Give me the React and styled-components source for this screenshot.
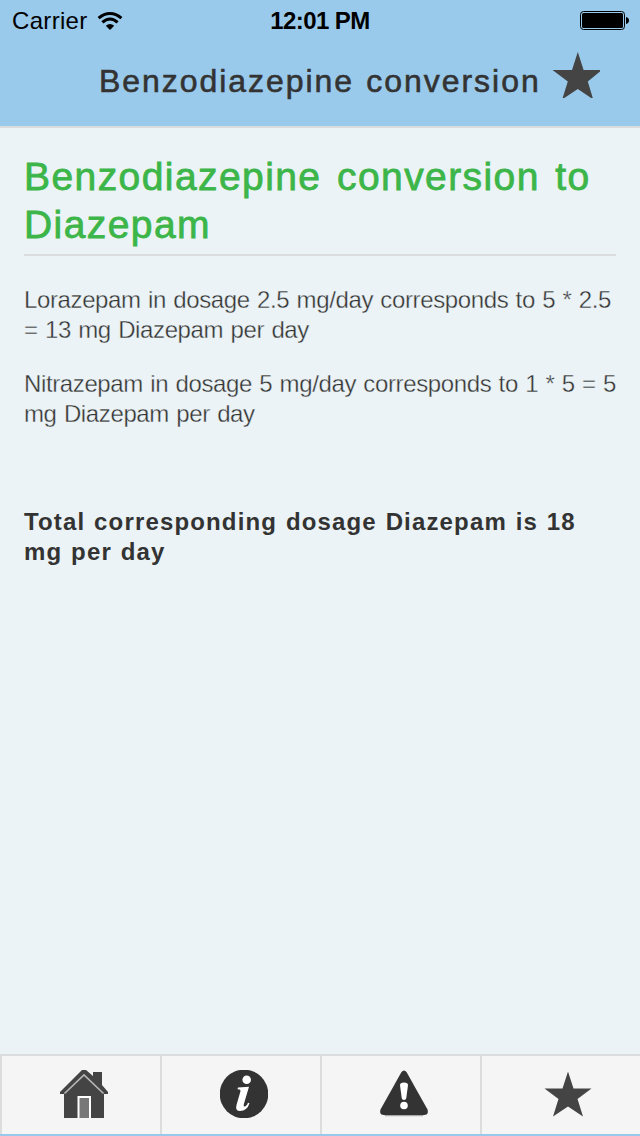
import React from "react";
import styled, { createGlobalStyle } from "styled-components";

const Global = createGlobalStyle`
  * { box-sizing: border-box; }
  body { margin: 0; background: #9acaeb; }
`;

const Screen = styled.div`
  width: 640px;
  height: 1136px;
  display: flex;
  flex-direction: column;
  background: #ebf3f6;
  color: #333;
  font-family: "Liberation Sans", Arial, sans-serif;
  border-bottom: 2px solid #9acaeb;
  overflow: hidden;
`;

const TopArea = styled.header`
  height: 128px;
  flex: none;
  background: #9acaeb;
  border-bottom: 2px solid #dbdcdd;
`;

const StatusBar = styled.div`
  display: grid;
  grid-template-columns: 1fr auto 1fr;
  align-items: center;
  height: 40px;
  padding: 0 11px 0 12px;
  color: #000;
  font-size: 24px;
`;

const Network = styled.div`
  display: flex;
  align-items: center;
  gap: 9px;
  letter-spacing: 0.32px;
  line-height: 28px;
  padding-top: 1px;
`;

const Clock = styled.div`
  font-weight: 700;
  letter-spacing: -0.6px;
  line-height: 28px;
  padding: 2px 1px 0 0;
`;

const Battery = styled.div`
  display: flex;
  justify-content: flex-end;
`;

const TitleBar = styled.div`
  display: flex;
  align-items: flex-start;
  padding: 12px 40px 0 99px;
`;

const Title = styled.h1`
  flex: 1;
  width: 0;
  margin: 10px 0 0;
  font-size: 32px;
  line-height: 38px;
  font-weight: 400;
  letter-spacing: 1.95px;
  word-spacing: 1.5px;
  white-space: nowrap;
  -webkit-text-stroke: 0.6px #333;
`;

const Content = styled.main`
  flex: 1;
  padding: 25px 24px 0;
`;

const Heading = styled.h2`
  margin: 0 0 29px;
  height: 103px;
  border-bottom: 2px solid #dbdcdd;
  color: #3cb549;
  font-size: 39px;
  line-height: 48px;
  font-weight: 400;
  letter-spacing: 1.42px;
  word-spacing: 3.3px;
  -webkit-text-stroke: 0.8px #3cb549;
`;

const Result = styled.p`
  margin: 0 -10px 24px 0;
  font-size: 24px;
  line-height: 30px;
  letter-spacing: -0.38px;
  word-spacing: 1.05px;
  -webkit-text-stroke: 0.35px #ebf3f6;
`;

const Total = styled.p`
  margin: 78px -10px 0 0;
  font-size: 24px;
  line-height: 30px;
  font-weight: 700;
  letter-spacing: 1.15px;
  word-spacing: 1px;
`;

const TabBar = styled.nav`
  display: grid;
  grid-template-columns: repeat(4, 160px);
  height: 80px;
  flex: none;
  border-top: 2px solid #dbdcdd;
  background: #f5f5f5;
`;

const Tab = styled.a`
  display: flex;
  justify-content: center;
  padding: 14px 0 0 ${(p) => (p.$last ? 14 : 6)}px;
  border-left: 2px solid #dbdcdd;
`;

const Icon = styled.svg`
  display: block;
  flex: none;
`;

const WifiIcon = () => (
  <Icon width="26" height="20" viewBox="0 0 26 20">
    <g fill="none" stroke="#000" strokeWidth="3">
      <path d="M1.6 7.2Q7 2.5 13 2.5T24.4 7.2" />
      <path d="M5.4 11.4Q9 8 13 8T20.6 11.4" />
    </g>
    <path d="M8.8 14.8Q13 11.4 17.2 14.8L13 19Z" />
  </Icon>
);

const BatteryIcon = () => (
  <Icon width="49" height="19" viewBox="0 0 49 19">
    <rect x="0.5" y="0.5" width="44" height="18" rx="3" fill="none" stroke="#000" />
    <rect x="2" y="2" width="41" height="15" rx="1.5" />
    <path d="M46 6Q49 6.6 49 9.5T46 13Z" />
  </Icon>
);

const FavoriteIcon = () => (
  <Icon width="48" height="46" viewBox="0 0 48 46">
    <path fill="#444" d="M25.8 0L31.6 18H50L35.8 29.4L41.2 47.4L25.8 37L10.2 47.4L15.8 29.4L.5 18H20Z" />
  </Icon>
);

const HomeIcon = () => (
  <Icon width="48" height="48" viewBox="0 0 48 48">
    <path fill="#444" d="M22 0H26L33 6V2H42V15L48 22V24H44V48H4V24H0V22Z" />
    <path fill="none" stroke="#b5b5b5" strokeWidth="1.7" d="M4.5 23.5L24 5L43.5 23.5" />
    <path fill="#fff" d="M17.5 26H31V48H17.5Z" />
    <path fill="#777" d="M19.5 28H29V48H19.5Z" />
  </Icon>
);

const InfoIcon = () => (
  <Icon width="48" height="48" viewBox="0 0 48 48">
    <circle cx="24" cy="24" r="24.3" fill="#333" />
    <circle cx="26.7" cy="9.8" r="4.3" fill="#fff" />
    <path fill="#fff" d="M18 17.6L29 16.7L23.8 34.3Q23 37.6 25.8 36Q27.2 35 28 32.7L29.5 33.3Q27 41 20 41Q15 41 16.5 35L20.4 21.4Q21 19 17.5 19.2Z" />
  </Icon>
);

const WarningIcon = () => (
  <Icon width="48" height="48" viewBox="0 0 48 48">
    <path fill="#aaa" d="M3 41H45L43 46.3H5Z" />
    <path fill="#333" d="M21.5 2Q24-1 26.5 2L47.5 39.5Q49 45 44 45H4Q-1 45 .5 39.5Z" />
    <path fill="#fff" d="M20 15Q20 12.5 24 12.5T28 15L26.3 28Q26 30 24 30T21.7 28Z" />
    <circle cx="24" cy="35.5" r="3.8" fill="#fff" />
  </Icon>
);

const StarIcon = () => (
  <Icon width="48" height="48" viewBox="0 0 48 48">
    <path fill="#444" d="M24 1.5L29.5 18.5H47.5L33.5 29L39 46.5L24 36.5L9 46.5L14.5 29L.5 18.5H18.5Z" />
  </Icon>
);

export default function App() {
  return (
    <>
      <Global />
      <Screen>
        <TopArea>
          <StatusBar>
            <Network>
              <span>Carrier</span>
              <WifiIcon />
            </Network>
            <Clock>12:01 PM</Clock>
            <Battery>
              <BatteryIcon />
            </Battery>
          </StatusBar>
          <TitleBar>
            <Title>Benzodiazepine conversion</Title>
            <FavoriteIcon />
          </TitleBar>
        </TopArea>
        <Content>
          <Heading>
            Benzodiazepine conversion to
            <br />
            Diazepam
          </Heading>
          <Result>
            Lorazepam in dosage 2.5 mg/day corresponds to 5 * 2.5
            <br />= 13 mg Diazepam per day
          </Result>
          <Result>
            Nitrazepam in dosage 5 mg/day corresponds to 1 * 5 = 5
            <br />
            mg Diazepam per day
          </Result>
          <Total>
            Total corresponding dosage Diazepam is 18
            <br />
            mg per day
          </Total>
        </Content>
        <TabBar>
          <Tab><HomeIcon /></Tab>
          <Tab><InfoIcon /></Tab>
          <Tab><WarningIcon /></Tab>
          <Tab $last><StarIcon /></Tab>
        </TabBar>
      </Screen>
    </>
  );
}
